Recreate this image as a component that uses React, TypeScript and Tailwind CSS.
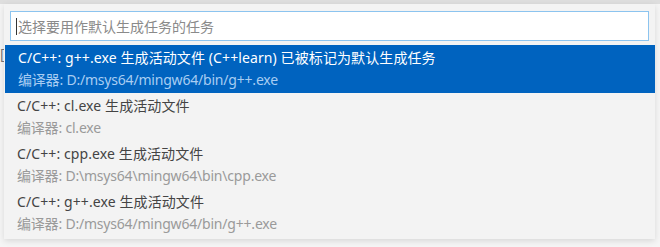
import React from "react";

const items = [
  { title: "C/C++: g++.exe 生成活动文件 (C++learn) 已被标记为默认生成任务", sub: "编译器: D:/msys64/mingw64/bin/g++.exe", selected: true },
  { title: "C/C++: cl.exe 生成活动文件", sub: "编译器: cl.exe" },
  { title: "C/C++: cpp.exe 生成活动文件", sub: "编译器: D:\\msys64\\mingw64\\bin\\cpp.exe" },
  { title: "C/C++: g++.exe 生成活动文件", sub: "编译器: D:/msys64/mingw64/bin/g++.exe" },
];

export default function App() {
  return (
    <div
      className="w-[660px] h-[247px] bg-[#f5f5f5] relative overflow-hidden"
      style={{ fontFamily: '"Noto Sans", "Noto Sans CJK SC", sans-serif' }}
    >
      <div className="h-[4px] bg-[#dedede]" />
      <span className="absolute left-0 top-[44px] text-[14px] text-[#777] leading-[20px]">[</span>
      <div className="relative ml-[4px] w-[651px] bg-[#f3f3f3] shadow-[0_2px_6px_rgba(0,0,0,0.12)] pt-[7px] pb-[2px]">
        <div className="mx-[6px] h-[30px] border border-[#8cc4ef] bg-white flex items-center pl-[5px]">
          <span className="w-px h-[17px] bg-[#333] mr-[1px]" />
          <span className="text-[14px] text-[#8a8a8a]">选择要用作默认生成任务的任务</span>
        </div>
        <div className="mt-[4px] flex flex-col">
          {items.map((it, i) => (
            <div
              key={i}
              className={
                "h-[48px] pl-[13px] flex flex-col justify-center " +
                (it.selected ? "bg-[#0063bf] ml-[1px]" : "")
              }
            >
              <div
                className={
                  "text-[14px] leading-[22px] whitespace-nowrap tracking-[0.1px] " +
                  (it.selected ? "text-white" : "text-[#444]")
                }
              >
                {it.title}
              </div>
              <div
                className={
                  "text-[14px] leading-[22px] whitespace-nowrap tracking-[-0.2px] " +
                  (it.selected ? "text-[#a8cdf2]" : "text-[#9a9a9a]")
                }
              >
                {it.sub}
              </div>
            </div>
          ))}
        </div>
      </div>
    </div>
  );
}
